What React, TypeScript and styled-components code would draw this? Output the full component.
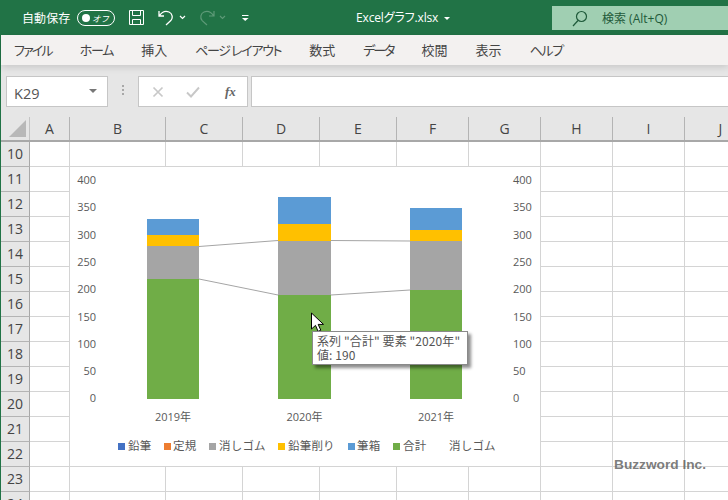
import React from "react";
import styled, { createGlobalStyle } from "styled-components";

const Global = createGlobalStyle`
  html, body { margin: 0; padding: 0; width: 728px; height: 500px; overflow: hidden; background: #fff; }
  #root { width: 728px; height: 500px; }
  * { box-sizing: border-box; }
`;

const UI = `"Open Sans", "Noto Sans CJK JP", sans-serif`;
const JP = `"Noto Sans CJK JP", "Open Sans", sans-serif`;

const Page = styled.div`
  width: 728px; height: 500px; overflow: hidden; position: relative;
  display: flex; flex-direction: column; font-family: ${UI}; color: #444;
`;

const TitleBar = styled.header`
  height: 35px; flex: none; background: #217346; color: #fff;
  display: flex; align-items: center; padding-left: 22px; position: relative;
`;
const AutoSave = styled.span`
  font: 12px ${JP}; font-feature-settings: "palt"; letter-spacing: 0.1px; width: 55px; flex: none;
`;
const Toggle = styled.span`
  width: 38px; height: 16px; flex: none; border: 1px solid #fff; border-radius: 8px;
  display: flex; align-items: center; justify-content: space-between; padding: 0 5px 0 4px;
  font: 8.5px ${JP}; font-style: italic;
  &::before { content: ""; width: 8px; height: 8px; border-radius: 50%; background: #fff; }
`;
const QuickIcon = styled.svg<{ $gap: number }>`
  flex: none; display: block; margin-left: ${(p) => p.$gap}px;
`;
const FileName = styled.span`
  position: absolute; left: 356px; top: 9px; font: 12px/17px ${UI}; font-feature-settings: "palt";
  letter-spacing: -0.15px; display: flex; align-items: center; gap: 6px;
  &::after { content: ""; border: 3px solid transparent; border-top: 3px solid #fff; border-bottom: 0; margin-top: 1px; }
`;
const Search = styled.div`
  position: absolute; left: 552px; top: 6px; width: 176px; height: 24px; background: #a0cfb2;
  color: #1f5a3a; display: flex; align-items: center; padding-left: 20px; gap: 14px;
  font: 12px ${UI}; font-feature-settings: "palt";
`;

const Main = styled.div`
  flex: 1; display: flex; flex-direction: column; border-left: 1px solid #217346; min-height: 0;
`;
const Menu = styled.nav`
  height: 30px; flex: none; background: #f3f1f0; display: flex; align-items: center;
  padding: 0 0 2px 13px; gap: 28px; position: relative; z-index: 1;
  box-shadow: 0 2px 7px rgba(0,0,0,0.14);
`;
const MenuItem = styled.span<{ $tight: number }>`
  font: 13px ${JP}; color: #444; font-feature-settings: "palt"; white-space: nowrap;
  letter-spacing: ${(p) => p.$tight}px;
`;

const FormulaBar = styled.div`
  height: 52px; flex: none; background: #e6e6e6; display: flex; align-items: flex-start;
  padding: 11px 0 0 5px;
`;
const NameBox = styled.div`
  width: 102px; height: 31px; flex: none; background: #fff; border: 1px solid #c6c6c6;
  display: flex; align-items: center; justify-content: space-between;
  padding: 3px 10px 0 7px; font: 14.5px ${UI}; color: #555;
  &::after { content: ""; border: 4px solid transparent; border-top: 4px solid #777; border-bottom: 0; margin-top: -5px; }
`;
const Dots = styled.span`
  width: 30px; flex: none; height: 31px; display: flex; flex-direction: column;
  align-items: center; justify-content: center; gap: 2px; padding-bottom: 3px;
  & > i { width: 2px; height: 2px; background: #a8a8a8; display: block; }
`;
const FnBox = styled.div`
  width: 110px; height: 31px; flex: none; background: #fff; border: 1px solid #c6c6c6;
  display: flex; align-items: center; padding-left: 12px; gap: 20px;
`;
const Fx = styled.i`
  font: italic bold 13px "Liberation Serif", serif; color: #666; margin-left: 4px; width: 14px;
`;
const Formula = styled.div`
  flex: 1; height: 31px; margin-left: 3px; background: #fff; border: 1px solid #c6c6c6; border-right: 0;
`;

const COLS = "29px 40px 96px 77px 77px 77px 72px 72px 72px 72px 72px";

const Sheet = styled.section`
  flex: 1; position: relative; min-height: 0; overflow: hidden; background: #fff;
`;
const ColHead = styled.div`
  height: 25px; display: grid; grid-template-columns: ${COLS}; background: #e6e6e6;
  border-bottom: 2px solid #a8a8a8;
`;
const Corner = styled.div`
  position: relative; border-right: 1px solid #c4c4c4;
  &::after {
    content: ""; position: absolute; right: 3px; bottom: 3px; width: 0; height: 0;
    border-left: 17px solid transparent; border-bottom: 17px solid #b8b8b8;
  }
`;
const ColCell = styled.div`
  display: flex; align-items: center; justify-content: center; font: 14px ${UI}; color: #444;
  border-right: 1px solid #b4b4b4;
`;
const Row = styled.div`
  height: 25px; display: grid; grid-template-columns: ${COLS};
`;
const RowHead = styled.div`
  background: #e6e6e6; border-right: 1px solid #a8a8a8; border-bottom: 1px solid #b4b4b4;
  display: flex; align-items: center; justify-content: center; font: 14px ${UI}; color: #444;
  padding-bottom: 1px;
`;
const Cell = styled.div`
  border-right: 1px solid #d4d4d4; border-bottom: 1px solid #d4d4d4;
`;

const ChartArea = styled.svg`
  position: absolute; left: 69px; top: 50px; display: block; background: #fff;
`;
const Tooltip = styled.div`
  position: absolute; left: 311px; top: 214px; width: 156px; height: 34px; background: #fff;
  border: 1px solid #8a8a8a; box-shadow: 3px 3px 3px rgba(0,0,0,0.45);
  padding: 2px 0 0 4px; font: 12px/14px ${JP}; color: #555; white-space: nowrap;
  font-feature-settings: "palt"; letter-spacing: 0.1px;
`;
const Pointer = styled.svg`
  position: absolute; left: 309px; top: 195px; display: block;
`;
const Watermark = styled.div`
  position: absolute; left: 613px; top: 340px; font: bold 13.7px "Liberation Sans", sans-serif;
  color: rgba(90,90,90,0.8); white-space: nowrap;
`;

const menu = [
  { t: "ファイル", tight: -1.8 },
  { t: "ホーム", tight: -1.3 },
  { t: "挿入", tight: 0 },
  { t: "ページ レイアウト", tight: -1.35 },
  { t: "数式", tight: 0 },
  { t: "データ", tight: -2 },
  { t: "校閲", tight: 0 },
  { t: "表示", tight: 0 },
  { t: "ヘルプ", tight: -1.3 },
];
const cols = ["A", "B", "C", "D", "E", "F", "G", "H", "I", "J"];
const rows = Array.from({ length: 15 }, (_, i) => 10 + i);

const BLUE = "#5b9bd5", YEL = "#ffc000", GRAY = "#a5a5a5", GREEN = "#70ad47";
const bars = [
  { x: 147, w: 52, label: "2019年", lx: 173, seg: [[219, 235, BLUE], [235, 246, YEL], [246, 279, GRAY], [279, 399, GREEN]] },
  { x: 278, w: 53, label: "2020年", lx: 304.5, seg: [[197, 224, BLUE], [224, 241, YEL], [241, 295, GRAY], [295, 399, GREEN]] },
  { x: 410, w: 52, label: "2021年", lx: 436, seg: [[208, 230, BLUE], [230, 241, YEL], [241, 290, GRAY], [290, 399, GREEN]] },
] as const;
const ticks = [400, 350, 300, 250, 200, 150, 100, 50, 0];
const legend = [
  { c: "#4472c4", sx: 118, tx: 128, t: "鉛筆" },
  { c: "#ed7d31", sx: 164, tx: 173, t: "定規" },
  { c: GRAY, sx: 209, tx: 219, t: "消しゴム" },
  { c: YEL, sx: 278, tx: 288, t: "鉛筆削り" },
  { c: BLUE, sx: 348, tx: 357, t: "筆箱" },
  { c: GREEN, sx: 393, tx: 403, t: "合計" },
  { c: "", sx: 0, tx: 449, t: "消しゴム" },
];

function Chart() {
  return (
    <ChartArea width={470} height={299} viewBox="70 167 470 299">
      {ticks.map((t, i) => (
        <g key={t} fill="#595959" fontSize="11" fontFamily={`"Open Sans", sans-serif`}>
          <text x={96} y={184 + i * 27.3} textAnchor="end">{t}</text>
          <text x={513} y={184 + i * 27.3}>{t}</text>
        </g>
      ))}
      <polyline points="199,246.5 278,240.5" fill="none" stroke="#a5a5a5" />
      <polyline points="331,240.5 410,241" fill="none" stroke="#a5a5a5" />
      <polyline points="199,279 278,295" fill="none" stroke="#a5a5a5" />
      <polyline points="331,295 410,290" fill="none" stroke="#a5a5a5" />
      {bars.map((b) => (
        <g key={b.label}>
          {b.seg.map(([a, z, c]) => (
            <rect key={c} x={b.x} y={a} width={b.w} height={z - a} fill={c} />
          ))}
          <text x={b.lx} y={421} textAnchor="middle" fontSize="11" fill="#595959"
            fontFamily={`"Open Sans", "Noto Sans CJK JP", sans-serif`}>{b.label}</text>
        </g>
      ))}
      {legend.map((l) => (
        <g key={l.tx}>
          {l.c && <rect x={l.sx} y={443} width={7} height={7} fill={l.c} />}
          <text x={l.tx} y={450} fontSize="11.5" fill="#595959" letterSpacing="0.2"
            fontFamily={`"Noto Sans CJK JP", sans-serif`}>{l.t}</text>
        </g>
      ))}
    </ChartArea>
  );
}

export default function App() {
  return (
    <Page>
      <Global />
      <TitleBar>
        <AutoSave>自動保存</AutoSave>
        <Toggle>オフ</Toggle>
        <QuickIcon $gap={13} width="17" height="17" viewBox="0 0 17 17" fill="none" stroke="#fff" strokeWidth="1">
          <path d="M1.5 1.5h14v14h-14z" />
          <path d="M4.5 1.5v5h8v-5M4.5 15.5v-5h8v5" />
        </QuickIcon>
        <QuickIcon $gap={12} width="18" height="17" viewBox="0 0 18 17" fill="none" stroke="#fff" strokeWidth="1.3">
          <path d="M2 2v5h5M2.3 6.8C5 2.8 9 1.8 12 3c3.5 1.5 4.2 6 1.8 8.6L9 16" />
        </QuickIcon>
        <QuickIcon $gap={4} width="7" height="5" viewBox="0 0 7 5" fill="none" stroke="#fff" strokeWidth="1.2">
          <path d="M1 1l2.5 2.5L6 1" />
        </QuickIcon>
        <QuickIcon $gap={12} width="18" height="17" viewBox="0 0 18 17" fill="none" stroke="#5e9a78" strokeWidth="1.2">
          <path d="M16 2v5h-5M15.7 6.8C13 2.8 9 1.8 6 3 2.5 4.5 1.8 9 4.2 11.6L9 16" />
        </QuickIcon>
        <QuickIcon $gap={3} width="7" height="5" viewBox="0 0 7 5" fill="none" stroke="#5e9a78" strokeWidth="1.1">
          <path d="M1 1l2.5 2.5L6 1" />
        </QuickIcon>
        <QuickIcon $gap={15} width="9" height="8" viewBox="0 0 9 8" fill="none" stroke="#fff">
          <path d="M1 1.5h6.5" />
          <path d="M1 4l3.2 3L7.6 4H1z" fill="#fff" stroke="none" />
        </QuickIcon>
        <FileName>Excelグラフ.xlsx</FileName>
        <Search>
          <svg width="16" height="17" viewBox="0 0 16 17" fill="none" stroke="#1f5a3a" strokeWidth="1.2">
            <circle cx="9.5" cy="6.5" r="5" />
            <path d="M6 10.5L1 16" />
          </svg>
          <span>検索 (Alt+Q)</span>
        </Search>
      </TitleBar>
      <Main>
        <Menu>
          {menu.map((m) => (
            <MenuItem key={m.t} $tight={m.tight}>{m.t}</MenuItem>
          ))}
        </Menu>
        <FormulaBar>
          <NameBox>K29</NameBox>
          <Dots><i /><i /><i /></Dots>
          <FnBox>
            <svg width="14" height="14" viewBox="0 0 14 14" stroke="#c8c8c8" strokeWidth="1.7" fill="none">
              <path d="M2.5 2.5l9 9M11.5 2.5l-9 9" />
            </svg>
            <svg width="16" height="14" viewBox="0 0 16 14" stroke="#c8c8c8" strokeWidth="1.9" fill="none">
              <path d="M2 7.5l4 4 8-9" />
            </svg>
            <Fx>fx</Fx>
          </FnBox>
          <Formula />
        </FormulaBar>
        <Sheet>
          <ColHead>
            <Corner />
            {cols.map((c) => (
              <ColCell key={c}>{c}</ColCell>
            ))}
          </ColHead>
          {rows.map((r) => (
            <Row key={r}>
              <RowHead>{r}</RowHead>
              {cols.map((c) => (
                <Cell key={c} />
              ))}
            </Row>
          ))}
          <Chart />
          <Pointer width="14" height="22" viewBox="0 0 14 22">
            <path d="M1.5 1v16l4-3.6 2.6 6 2.7-1.2-2.6-5.8h5.3z" fill="#fff" stroke="#000" strokeWidth="1" />
          </Pointer>
          <Tooltip>
            系列 "合計" 要素 "2020年"
            <br />
            値: 190
          </Tooltip>
          <Watermark>Buzzword Inc.</Watermark>
        </Sheet>
      </Main>
    </Page>
  );
}
